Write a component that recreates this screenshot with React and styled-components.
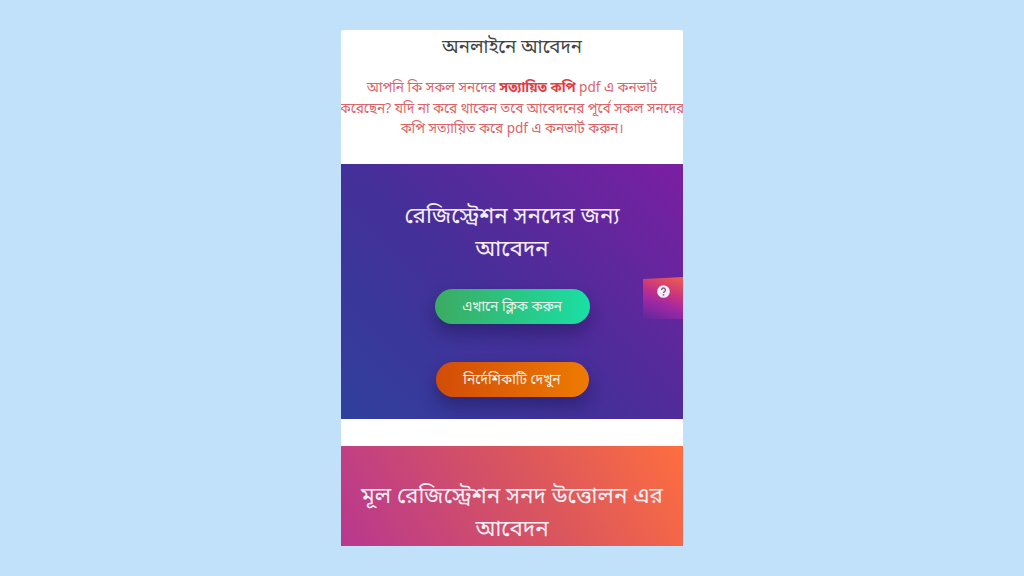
import React from "react";
import styled, { createGlobalStyle } from "styled-components";

const Global = createGlobalStyle`
  html, body { margin: 0; padding: 0; height: 576px; overflow: hidden; background: #c1e1fb; }
  body { font-family: "Noto Sans", "Noto Sans Bengali", "Lohit Bengali", "Liberation Sans", sans-serif; }
`;
const Page = styled.div`
  width: 1024px; height: 576px; display: flex; justify-content: center; padding-top: 30px; box-sizing: border-box;
`;
const Card = styled.main`
  position: relative; width: 342px; height: 516px; background: #fff; border-radius: 2px 2px 0 0;
  display: flex; flex-direction: column; overflow: hidden;
`;
const Intro = styled.section`
  height: 134px; padding-top: 3px; box-sizing: border-box; text-align: center;
`;
const IntroTitle = styled.h2`
  margin: 0; font-size: 18.6px; line-height: 26px; font-weight: 400; color: #444;
`;
const Notice = styled.p`
  margin: 18px -4px 0; font-size: 13.6px; line-height: 20.5px; color: #dc6468; white-space: nowrap;
  strong { color: #e23c44; font-weight: 700; }
`;
const Apply = styled.section`
  height: 255px; box-sizing: border-box; padding-top: 34px; text-align: center;
  display: flex; flex-direction: column; align-items: center;
  background: linear-gradient(45deg, #2f409d 0%, #452f98 45%, #7b1fa2 100%);
`;
const Spacer = styled.div`height: 27px; background: #fff;`;
const Heading = styled.h2`
  margin: 0; font-size: 22.4px; line-height: 33px; font-weight: 400; color: #f3edf7; white-space: nowrap;
`;
const Pill = styled.button`
  width: ${p => p.$w}px; height: 35px; margin-top: ${p => p.$mt}px; border: 0; border-radius: 18px;
  font: inherit; font-size: 13.8px; color: #e8f3ea; padding: 0;
  background: linear-gradient(90deg, ${p => p.$from}, ${p => p.$to});
  box-shadow: 0 9px 16px rgba(20, 15, 70, 0.4);
`;
const Upload = styled.section`
  flex: 1; padding-top: 32px; text-align: center;
  background: linear-gradient(60deg, #b8388f 0%, #d9555f 55%, #fe6e3e 100%);
`;
const HelpTab = styled.div`
  position: absolute; right: 0; top: 247px; width: 40px; height: 42px;
  display: flex; align-items: flex-start; justify-content: center; padding-top: 8px; box-sizing: border-box;
  background: linear-gradient(200deg, #f0604a 0%, #c9357f 38%, #a028a4 62%, rgba(140, 35, 165, 0) 100%);
  clip-path: polygon(0 2px, 100% 0, 100% 100%, 0 100%);
`;

export default function App() {
  return (
    <Page>
      <Global />
      <Card>
        <Intro>
          <IntroTitle>অনলাইনে আবেদন</IntroTitle>
          <Notice>
            আপনি কি সকল সনদের <strong>সত্যায়িত কপি</strong> pdf এ কনভার্ট<br />
            করেছেন? যদি না করে থাকেন তবে আবেদনের পূর্বে সকল সনদের<br />
            কপি সত্যায়িত করে pdf এ কনভার্ট করুন।
          </Notice>
        </Intro>
        <Apply>
          <Heading>রেজিস্ট্রেশন সনদের জন্য<br />আবেদন</Heading>
          <Pill $w={155} $mt={25} $from="#3cab62" $to="#1adfa4">এখানে ক্লিক করুন</Pill>
          <Pill $w={153} $mt={38} $from="#d24c08" $to="#ee7b02">নির্দেশিকাটি দেখুন</Pill>
        </Apply>
        <Spacer />
        <Upload>
          <Heading>মূল রেজিস্ট্রেশন সনদ উত্তোলন এর<br />আবেদন</Heading>
        </Upload>
        <HelpTab>
          <svg width="13" height="13" viewBox="0 0 14 14">
            <circle cx="7" cy="7" r="6.8" fill="#f4eef4" />
            <path d="M4.9 5.4a2.1 2.1 0 1 1 3.2 1.8c-.7.4-1.1.8-1.1 1.5" fill="none" stroke="#8a5a86" strokeWidth="1.5" />
            <circle cx="7" cy="10.6" r="0.95" fill="#8a5a86" />
          </svg>
        </HelpTab>
      </Card>
    </Page>
  );
}
